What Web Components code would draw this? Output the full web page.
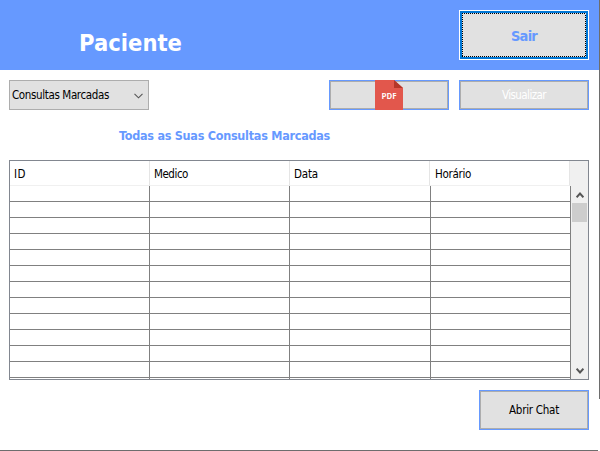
<!DOCTYPE html>
<html lang="pt"><head><meta charset="utf-8"><title>Paciente</title>
<style>html,body{margin:0;background:#fff}body{width:600px;height:451px;overflow:hidden}</style></head>
<body><patient-window></patient-window>
<script>
const define=(name,html,setup)=>customElements.define(name,class extends HTMLElement{
  connectedCallback(){
    if(this.shadowRoot)return;
    this.attachShadow({mode:'open'}).innerHTML=html;
    if(setup)setup(this,this.shadowRoot);
  }
});

// A label whose letters are spaced to fill the width given in "w".
define('fit-text',`<style>:host{display:block;white-space:nowrap;line-height:1}span{display:inline-block}</style><span><slot></slot></span>`,(el,root)=>{
  const span=root.querySelector('span'),n=el.textContent.length;
  const w=span.getBoundingClientRect().width;
  span.style.letterSpacing=((+el.getAttribute('w')-w)/n)+'px';
});

define('swing-button',`<style>
:host{display:flex;box-sizing:border-box;align-items:center;justify-content:center;background:#e1e1e1;border:1px solid #69f;box-shadow:inset 0 0 0 1px #adadad;color:#000}
:host([focused]){border-color:#fff;box-shadow:inset 0 0 0 2px #0078d7;padding:2px}
.in{flex:1;align-self:stretch;box-sizing:border-box;display:flex;align-items:center;justify-content:center}
::slotted(fit-text){padding-top:2px}
:host([focused]) .in{
 background:repeating-linear-gradient(90deg,#000 0 1px,#e1e1e1 1px 2px) top/100% 1px no-repeat,
 repeating-linear-gradient(90deg,#000 0 1px,#e1e1e1 1px 2px) bottom/100% 1px no-repeat,
 repeating-linear-gradient(#000 0 1px,#e1e1e1 1px 2px) left/1px 100% no-repeat,
 repeating-linear-gradient(#000 0 1px,#e1e1e1 1px 2px) right/1px 100% no-repeat}
</style><div class="in"><slot></slot></div>`);

define('pdf-icon',`<style>:host{display:block;width:28px;height:30px;margin:-1px 0}svg{display:block}</style>
<svg width="28" height="30"><path d="M0 0H19L28 8V30H0Z" fill="#e2574c"/><path d="M19 0L28 8H19Z" fill="#b53629"/>
<text x="6.5" y="19" textLength="15" lengthAdjust="spacingAndGlyphs" font-family="Open Sans,sans-serif" font-weight="600" font-size="8.5" fill="#fff">PDF</text></svg>`);

define('combo-box',`<style>:host{display:flex;box-sizing:border-box;align-items:center;justify-content:space-between;background:#e1e1e1;border:1px solid #adadad;padding:0 5px 0 2px}svg{margin-top:2px}::slotted(fit-text){padding-top:2px}</style>
<slot></slot><svg width="9" height="6"><path d="M.5 .8L4.5 4.8L8.5 .8" fill="none" stroke="#555" stroke-width="1.1"/></svg>`);

define('scroll-bar',`<style>
:host{display:flex;flex-direction:column;align-items:center;background:#f0f0f0;width:17px}
svg{display:block;flex:none}.t{width:15px;height:19px;background:#cdcdcd;margin:5px 0 auto}
</style><svg style="margin-top:6px" width="8" height="6"><path d="M.6 5.2L4 1.5L7.4 5.2" fill="none" stroke="#555" stroke-width="2"/></svg>
<div class="t"></div><svg style="margin-bottom:5px" width="8" height="6"><path d="M.6 .8L4 4.5L7.4 .8" fill="none" stroke="#555" stroke-width="2"/></svg>`);

define('data-table',`<style>
:host{display:flex;flex-direction:column;box-sizing:border-box;border:1px solid #828790;background:#fff;overflow:hidden}
.head{display:grid;grid-template-columns:140px 140px 140px 140px 1fr;height:25px;flex:none}
.head div{box-sizing:border-box;border-right:1px solid #e5e5e5;border-bottom:1px solid #f0f0f0;padding:8px 0 0 4px}
.head div:nth-child(4){padding-left:5px}.head .corner{background:#f0f0f0;border:0}
.main{display:flex;flex:1;min-height:0}
.rows{flex:1;overflow:hidden}
.row{display:grid;grid-template-columns:140px 140px 141px 140px;height:16px}
.row i{box-sizing:border-box;border-right:1px solid #808080;border-bottom:1px solid #808080}
</style><div class="head"><div><fit-text w="12">ID</fit-text></div><div><fit-text w="34">Medico</fit-text></div><div><fit-text w="24">Data</fit-text></div><div><fit-text w="36">Horário</fit-text></div><div class="corner"></div></div>
<div class="main"><div class="rows"></div><scroll-bar></scroll-bar></div>`,(el,root)=>{
 root.querySelector('.rows').innerHTML='<div class="row"><i></i><i></i><i></i><i></i></div>'.repeat(13);
});

define('patient-window',`<style>
:host{display:grid;grid-template:450px 1px/599px 1px;width:600px;height:451px;font:11.5px "DejaVu Sans Condensed","DejaVu Sans",sans-serif;font-stretch:condensed;color:#000}
.page{display:flex;flex-direction:column}
.edge{height:399px;background:#6d6d6d}.base{width:598px;background:#6d6d6d}
header{height:70px;box-sizing:border-box;background:#69f;display:flex;justify-content:space-between;padding:10px 10px 0 79px}
h1{margin:22px 0 0;font-size:23.5px;color:#fff}
.tools{display:flex;padding:10px 10px 0 9px;height:30px}
combo-box{width:140px}.pdf{width:120px;margin-left:180px}.view{width:130px;margin-left:10px;color:#fff}
h2{margin:20px 0 0 119px;height:30px;font-size:12.5px;color:#69f}
data-table{width:580px;height:220px;margin-left:9px}
.chat{width:110px;height:40px;margin:10px 0 0 479px}
</style>
<div class="page"><header><h1><fit-text w="103">Paciente</fit-text></h1>
<swing-button focused style="width:130px;height:50px;font-size:14.5px;font-weight:700;color:#69f"><fit-text w="26">Sair</fit-text></swing-button></header>
<div class="tools"><combo-box><fit-text w="97">Consultas Marcadas</fit-text></combo-box>
<swing-button class="pdf"><pdf-icon></pdf-icon></swing-button><swing-button class="view"><fit-text w="44">Visualizar</fit-text></swing-button></div>
<h2><fit-text w="211">Todas as Suas Consultas Marcadas</fit-text></h2>
<data-table></data-table><swing-button class="chat"><fit-text w="50">Abrir Chat</fit-text></swing-button></div>
<div class="edge"></div><div class="base"></div>`);
</script></body></html>
